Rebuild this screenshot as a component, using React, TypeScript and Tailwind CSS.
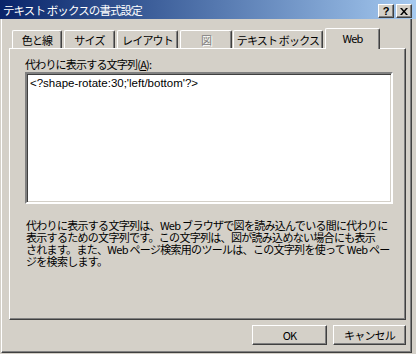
import React from "react";

const raised =
  "border border-t-white border-l-white border-r-[#404040] border-b-[#404040] shadow-[inset_-1px_-1px_0_#808080]";

function Tab({
  label,
  width,
  ml,
  selected,
  disabled,
}: {
  label: string;
  width: string;
  ml: string;
  selected?: boolean;
  disabled?: boolean;
}) {
  if (selected) {
    return (
      <div
        className={`${width} ${ml} relative z-10 -mb-px h-[21px] bg-[#d4d0c8] border-t border-l border-r border-t-white border-l-white border-r-[#404040] shadow-[inset_-1px_0_0_#808080] rounded-t-[2px] flex items-start justify-center pt-[2px]`}
      >
        <span className="leading-[14px]">{label}</span>
      </div>
    );
  }
  return (
    <div
      className={`${width} ${ml} h-[18px] bg-[#d4d0c8] border-t border-l border-r border-t-white border-l-white border-r-[#404040] shadow-[inset_-1px_0_0_#808080] rounded-t-[2px] flex items-center justify-center`}
    >
      <span
        className={
          disabled
            ? "leading-[14px] text-[#808080] [text-shadow:1px_1px_0_#ffffff]"
            : "leading-[14px]"
        }
      >
        {label}
      </span>
    </div>
  );
}

const lines = [
  "代わりに表示する文字列は、Web ブラウザで図を読み込んでいる間に代わりに",
  "表示するための文字列です。この文字列は、図が読み込めない場合にも表示",
  "されます。また、Web ページ検索用のツールは、この文字列を使って Web ペー",
  "ジを検索します。",
];

export default function App() {
  return (
    <div className="w-[416px] h-[354px] bg-[#d4d0c8] flex flex-col overflow-hidden text-black text-[11px] tracking-[-0.8px] font-['Noto_Sans_CJK_JP',sans-serif]">
      {/* Title bar */}
      <div className="h-[19px] shrink-0 bg-gradient-to-r from-[#0a246a] to-[#a6caf0] relative flex items-center pl-[3px]">
        <span className="text-white leading-[14px] text-[11.5px] tracking-[-0.9px]">
          テキスト ボックスの書式設定
        </span>
        <div className="absolute top-[4px] left-[378px] flex gap-[2px]">
          <div
            className={`w-[16px] h-[14px] bg-[#d4d0c8] ${raised} flex items-center justify-center`}
          >
            <span className="font-['Liberation_Sans',sans-serif] font-bold text-[11px] leading-[11px] tracking-normal">
              ?
            </span>
          </div>
          <div
            className={`w-[16px] h-[14px] bg-[#d4d0c8] ${raised} flex items-center justify-center`}
          >
            <svg width="8" height="7" viewBox="0 0 8 7">
              <path d="M0 0h2l2 2.5L6 0h2L5 3.5 8 7H6L4 4.5 2 7H0l3-3.5z" fill="#000" />
            </svg>
          </div>
        </div>
      </div>

      {/* Window body */}
      <div className="flex-1 ml-px mr-[4px] mb-px border-l border-l-white border-r border-r-[#404040] border-b border-b-[#404040] shadow-[inset_-1px_-1px_0_#808080] flex flex-col pl-[7px] pr-[4px] pt-[9px]">
        {/* Tabs */}
        <div className="h-[20px] flex items-end">
          <Tab label="色と線" width="w-[50px]" ml="ml-[3px]" />
          <Tab label="サイズ" width="w-[51px]" ml="ml-[2px]" />
          <Tab label="レイアウト" width="w-[61px]" ml="ml-[2px]" />
          <Tab label="図" width="w-[52px]" ml="ml-[2px]" disabled />
          <Tab label="テキスト ボックス" width="w-[90px]" ml="ml-px" />
          <Tab label="Web" width="w-[55px]" ml="ml-[2px]" selected />
        </div>

        {/* Panel */}
        <div className="w-[397px] h-[272px] border border-t-white border-l-white border-r-[#404040] border-b-[#404040] shadow-[inset_-1px_-1px_0_#808080] pl-[15px] pt-[9px]">
          <div className="leading-[12px] h-[12px]">
            代わりに表示する文字列(<span className="underline">A</span>):
          </div>
          <div className="mt-[2px] w-[368px] h-[132px] bg-white border-2 border-t-[#808080] border-l-[#808080] border-b-white border-r-white shadow-[inset_1px_1px_0_#404040,inset_-1px_-1px_0_#d4d0c8] pl-[3px] pt-[3px]">
            <div className="font-['Liberation_Sans',sans-serif] text-[11.5px] tracking-normal leading-[13px]">
              {"<?shape-rotate:30;'left/bottom'?>"}
            </div>
          </div>
          <div className="mt-[15px] ml-px flex flex-col tracking-[-0.7px]">
            {lines.map((l, i) => (
              <div key={i} className="h-[12px] leading-[12px] whitespace-nowrap">
                {l}
              </div>
            ))}
          </div>
        </div>

        {/* Buttons */}
        <div className="mt-[5px] flex justify-end gap-[6px] w-[397px]">
          <div
            className={`w-[75px] h-[20px] ${raised} flex items-center justify-center`}
          >
            <span className="leading-[12px]">OK</span>
          </div>
          <div
            className={`w-[73px] h-[20px] ${raised} flex items-center justify-center`}
          >
            <span className="leading-[12px]">キャンセル</span>
          </div>
        </div>
      </div>
    </div>
  );
}
